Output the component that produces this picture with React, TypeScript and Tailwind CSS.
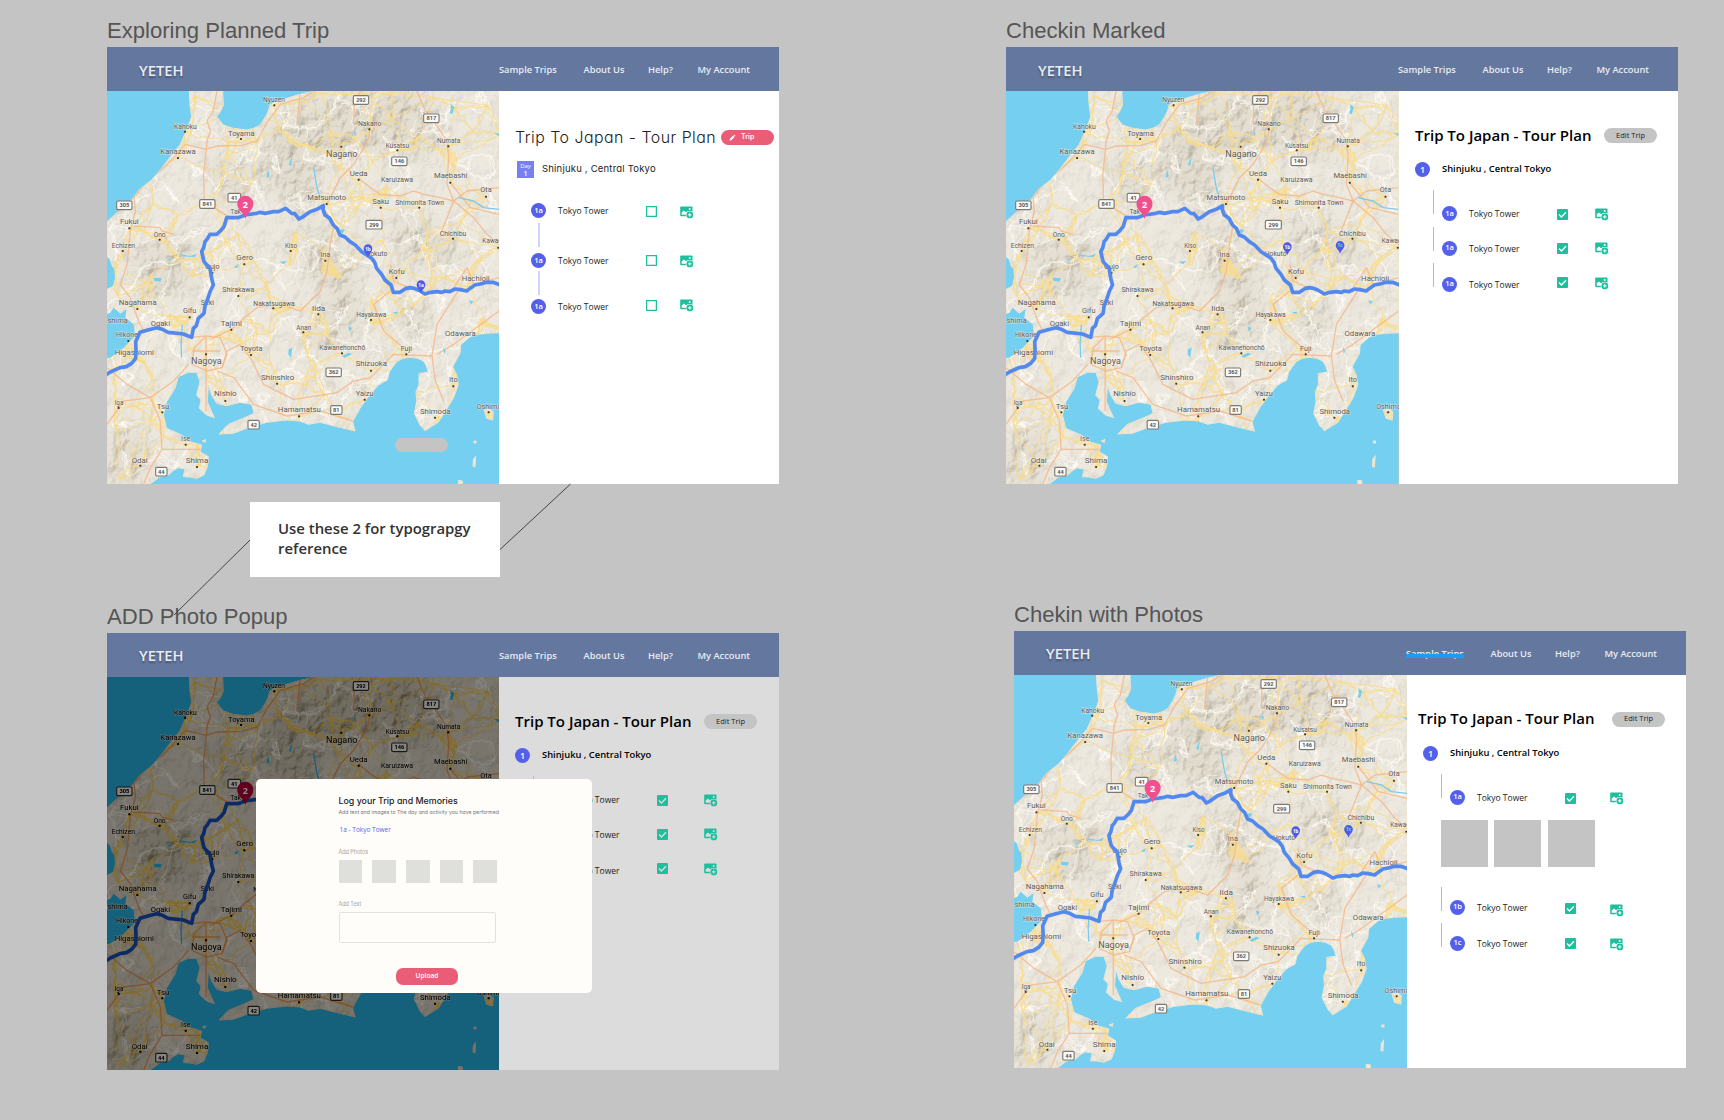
import React from "react";

type Label = [string, number, number, number, number?];
type Point = [number, number];

/* name, centre x, baseline y, width, optional size */
const LABELS: Label[] = [
  ["Nyuzen", 501, 34, 66], ["Kahoku", 235, 114, 68], ["Toyama", 403, 134, 80, 22], ["Kanazawa", 213, 190, 106, 22],
  ["Fukui", 67, 400, 56, 22], ["Ono", 158, 438, 36], ["Echizen", 49, 470, 70], ["Tak", 386, 370, 32], ["Gero", 413, 507, 50, 22],
  ["Gujo", 316, 534, 44], ["Kiso", 552, 472, 36], ["Nakano", 788, 106, 70], ["Kusatsu", 871, 170, 70], ["Nagano", 704, 198, 94, 27],
  ["Ueda", 755, 254, 54, 22], ["Karuizawa", 870, 274, 96], ["Maebashi", 1031, 262, 100, 22], ["Numata", 1025, 155, 70],
  ["Ota", 1137, 304, 34, 22], ["Matsumoto", 659, 327, 116, 22], ["Saku", 821, 340, 50, 22], ["Shimonita Town", 938, 341, 146],
  ["Chichibu", 1038, 434, 80], ["Kawagoe", 1166, 457, 80], ["Ina", 655, 497, 30], ["Hokuto", 808, 496, 66], ["Kofu", 869, 550, 48, 22],
  ["Hachioji", 1106, 570, 84, 22], ["Shirakawa", 394, 604, 96], ["Nagahama", 92, 642, 114, 22], ["Seki", 301, 642, 40],
  ["Gifu", 248, 666, 40, 22], ["Nakatsugawa", 501, 644, 124], ["Tajimi", 373, 704, 64, 22], ["Ogaki", 160, 704, 58, 22],
  ["Takashima", 8, 697, 108, 22], ["Hikone", 60, 738, 66, 22], ["Higashiomi", 82, 792, 118, 22], ["Toyota", 433, 780, 68, 22],
  ["Nagoya", 298, 820, 92, 27], ["Shinshiro", 512, 866, 100, 22], ["Nishio", 355, 916, 68, 22], ["Iga", 36, 943, 26],
  ["Tsu", 168, 953, 38, 22], ["Hamamatsu", 577, 964, 129, 22], ["Ise", 236, 1050, 28, 22], ["Odai", 98, 1115, 48], ["Shima", 270, 1116, 68, 22],
  ["Anan", 590, 717, 45], ["Iida", 635, 659, 40, 22], ["Hayakawa", 793, 679, 90], ["Fuji", 898, 779, 34, 22],
  ["Kawanehonchō", 706, 778, 138], ["Shizuoka", 793, 826, 94, 22], ["Yaizu", 773, 914, 54, 22], ["Odawara", 1060, 734, 92, 22],
  ["Ito", 1039, 874, 26, 22], ["Shimoda", 985, 968, 92, 22], ["Oshima", 1146, 954, 74],
];

const DOTS: Point[] = [
  [502, 43], [234, 122], [402, 144], [213, 201], [67, 412], [158, 446], [47, 480], [412, 520], [551, 480], [787, 115], [871, 178],
  [703, 167], [755, 266], [1030, 275], [1024, 166], [1137, 317], [659, 339], [821, 350], [937, 350], [1038, 443], [1174, 470],
  [655, 509], [868, 561], [394, 615], [91, 654], [248, 679], [499, 652], [373, 716], [64, 750], [432, 792], [297, 790], [510, 878],
  [355, 930], [35, 951], [166, 964], [576, 976], [236, 1061], [100, 1124], [270, 1128], [589, 724], [634, 670], [792, 687],
  [898, 790], [705, 787], [792, 839], [773, 926], [1039, 886], [984, 980], [1145, 964], [316, 546],
];

const SHIELDS: Label[] = [
  ["292", 762, 27, 46], ["817", 973, 82, 46], ["146", 877, 211, 46], ["299", 801, 401, 48], ["305", 52, 343, 46],
  ["841", 301, 339, 46], ["41", 382, 320, 38], ["42", 440, 1001, 34], ["44", 163, 1142, 34], ["362", 680, 844, 46], ["81", 688, 957, 34],
];

const LAND =
  "M247 0L249 42L254 77L241 112L219 162L194 192L164 232L134 267L99 294L74 327L39 357L0 392V1179H129L159 1157L184 1152L200 1138L214 1130L234 1134L229 1157L250 1158L269 1162L291 1152L301 1127L304 1097L279 1082L284 1062L249 1052L224 1032L179 1012L169 972L179 932L204 892L214 857L244 844L269 844L279 872L269 912L282 927L277 952L299 972L322 980L314 962L301 932L304 882L314 912L329 937L359 944L399 934L434 940L441 967L409 982L364 1000L336 1029L379 1027L419 1012L479 994L539 987L579 990L604 1000L639 994L679 1004L744 1020L737 992L759 952L784 917L814 882L841 867L847 842L869 812L888 802L909 799L932 802L949 810L958 824L964 844L936 847L936 882L927 902L929 932L922 967L939 1002L954 1019L994 994L1014 962L1039 922L1054 882L1049 852L1037 827L1059 787L1061 762L1089 737L1110 730L1139 727L1176 725V0H624L579 10L539 22L505 32L489 42L484 60L476 77L459 102L440 112L419 117L379 112L349 102L329 77L340 62L349 42L347 0ZM1131 957L1145 953L1159 962L1157 987L1139 982ZM1099 1105L1106 1096L1104 1128L1098 1126ZM1054 1168L1066 1170V1179H1054ZM1101 1050H1107V1056H1101ZM286 1050L296 1046L294 1054Z";

const ROUTE =
  "M-4 852L10 843L39 830L58 827L74 817L86 802L87 775L86 752L99 724L120 718L149 710L166 715L184 724L229 729L254 739L259 712L268 704L274 682L291 667L294 645L301 627L310 600L319 582L314 562L309 532L298 520L291 512L284 482L290 470L294 452L300 445L309 430L329 430L340 420L351 407L359 380L394 380L414 372L449 367L460 364L475 367L499 362L515 362L536 352L554 367L563 368L576 384L590 376L609 362L630 355L649 344L648 356L654 372L668 382L679 402L690 412L699 432L714 438L729 452L745 462L764 482L794 502L803 514L809 532L824 550L834 567L852 582L859 604L879 604L895 593L909 590L922 592L934 597L954 609L970 604L989 602L1005 604L1014 600L1028 602L1044 594L1060 596L1079 600L1092 590L1104 582L1120 579L1139 574L1158 574L1180 582";

const TRUNKS = [
  "M330 0L318 60L300 90L310 120L300 150L298 175L290 250L292 339L320 350L370 380L414 372",
  "M0 385L50 350L90 310L110 280L170 230L200 200L235 160L298 175L330 165L403 163L450 150L480 95L520 40L590 20L620 0",
  "M80 300L85 360L70 420L65 470L60 520L40 582L70 620L95 690L110 720",
  "M80 405L160 410L165 420L200 430",
  "M660 340L700 260L740 220L765 180L785 140L790 100",
  "M580 0L572 80L570 100",
  "M740 100L742 40L760 0M930 0L955 60L965 80",
  "M755 262L790 290L820 310L880 315L920 300L950 310L1000 320L1040 330L1080 300L1176 290",
  "M1040 330L1020 280L1025 200L1020 150L960 60",
  "M1040 330L1100 380L1140 430L1176 460M1040 330L1020 380L1000 430M1030 275L1090 350L1176 370",
  "M650 350L680 400L668 470L660 540L640 600L580 660L520 640L450 650L400 690L373 716L310 745",
  "M254 739L297 735L340 740L360 790L345 830L300 840L255 820L262 770L297 735",
  "M297 735V960M340 780H255M330 840L380 860L440 940L540 975L640 960L737 990",
  "M345 830L360 780L400 760L430 800L470 880L560 925L690 905L740 870L790 860L860 790L975 795L990 700L1060 590",
  "M975 795L985 870L1010 930M990 790L1040 760L1176 660M1040 590L1080 530L1100 580L1176 560",
  "M0 830L60 880L130 920L200 870L245 820M130 920L160 990L165 1075H279M165 1075L130 1130L110 1179M0 1000L50 930L130 920",
  "M850 600L800 640L830 720L900 780M850 520L860 570L930 600",
];

const LAKES =
  "M-4 494L8 505L14 524L22 535L24 560L18 584L-4 596ZM-4 672L10 665L20 650L40 668L58 655L55 680L80 700L84 735L50 770L10 800L-4 800ZM480 250L484 238L488 256L478 262ZM545 222L552 204L556 200L552 224ZM1030 40L1042 48L1036 70L1028 66L1032 54ZM1160 125L1180 128V138ZM172 508L195 502L190 508ZM220 490L250 495L270 488L262 498L225 496ZM696 420L704 414L714 418L706 428ZM380 528L395 520L390 532ZM518 512L540 510L530 520ZM140 560L165 562L160 572L142 570ZM723 705L734 712L728 722ZM1008 765L1016 780L1012 790ZM856 664L872 662L870 670ZM1086 628L1100 632L1092 640ZM740 118L748 125L744 135ZM545 775L556 770L552 800L544 790ZM705 795L725 785L735 790L712 800Z";

function rng(seed: number) {
  let s = seed;
  return () => {
    s = (s * 16807) % 2147483647;
    return s / 2147483647;
  };
}

/* A web of minor roads: every point joins its nearest neighbours by a bent line. */
function web(points: Point[], links: number, bend: number, seed: number) {
  const rand = rng(seed);
  let d = "";
  points.forEach((p, i) => {
    points
      .map((q, j) => ({ q, j, r: Math.hypot(p[0] - q[0], p[1] - q[1]) }))
      .filter((o) => o.j !== i)
      .sort((a, b) => a.r - b.r)
      .slice(0, links)
      .forEach(({ q }) => {
        d += `M${p[0]} ${p[1]}`;
        for (let k = 1; k < 5; k++) {
          const t = k / 5;
          const x = p[0] + (q[0] - p[0]) * t + (rand() - 0.5) * bend;
          const y = p[1] + (q[1] - p[1]) * t + (rand() - 0.5) * bend;
          d += `L${x.toFixed(0)} ${y.toFixed(0)}`;
        }
        d += `L${q[0]} ${q[1]}`;
      });
  });
  return d;
}

const scatter = (n: number, seed: number): Point[] => {
  const rand = rng(seed);
  return Array.from({ length: n }, () => [Math.round(rand() * 1176), Math.round(rand() * 1179)] as Point);
};

const YELLOW = web([...DOTS, ...scatter(190, 77)], 4, 16, 11);
const WHITE = web(scatter(480, 991), 3, 14, 5);
const SHADE = web(scatter(260, 4242), 2, 26, 9);

function Pin({ x, y, text, color = "#fff" }: { x: number; y: number; text: string; color?: string }) {
  return (
    <g transform={`translate(${x} ${y})`}>
      <path d="M0 24C-3 14-13 9-13-1A13 13 0 0 1 13-1C13 9 3 14 0 24Z" fill="#4f5be8" />
      <text y="5" textAnchor="middle" fontSize="14" fontWeight="700" fill={color} fontFamily="Open Sans, sans-serif">
        {text}
      </text>
    </g>
  );
}

type MapProps = { id: string; onRoute?: boolean; className?: string; route?: string; pin?: string };

function TripMap({ id, onRoute, className = "w-[392px]", route = "#5389ee", pin = "#f1508f" }: MapProps) {
  return (
    <svg viewBox="0 0 1176 1179" preserveAspectRatio="none" className={`block h-[393px] shrink-0 ${className}`}>
      <defs>
        <clipPath id={`${id}-land`}>
          <path d={LAND} />
        </clipPath>
        <filter id={`${id}-relief`} x="0" y="0" width="100%" height="100%" colorInterpolationFilters="sRGB">
          <feTurbulence type="fractalNoise" baseFrequency="0.024 0.02" numOctaves="4" seed="8" />
          <feDiffuseLighting surfaceScale="18" lightingColor="#ffffff">
            <feDistantLight azimuth="225" elevation="58" />
          </feDiffuseLighting>
          <feColorMatrix type="matrix" values="0 0 0 0 .6  0 0 0 0 .57  0 0 0 0 .5  -1.5 0 0 0 1.3" />
        </filter>
        <filter id={`${id}-soft`} x="-30%" y="-30%" width="160%" height="160%">
          <feGaussianBlur stdDeviation="28" />
        </filter>
        <mask id={`${id}-hills`} maskUnits="userSpaceOnUse" x="0" y="0" width="1176" height="1179">
          <rect width="1176" height="1179" fill="#4a4a4a" />
          <g fill="#fff" filter={`url(#${id}-soft)`}>
            <path d="M500 90L680 0H900L1000 60L980 200L830 180L640 220L610 400L540 330L420 230Z" />
            <path d="M680 420L740 500L760 700L640 800L600 720L680 600L600 560L570 430Z" />
            <path d="M840 380L1000 400L1080 520L900 520ZM300 200L420 220L420 330L320 300ZM60 480L250 430L280 560L120 640Z" />
            <path d="M870 620L960 640L950 740L880 730ZM0 1040L120 1000L120 1179H0Z" />
          </g>
        </mask>
      </defs>
      <rect width="1176" height="1179" fill="#75cff0" />
      <path d={LAND} fill="#f2eee6" stroke="#ece6d2" strokeWidth="3" />
      <g clipPath={`url(#${id}-land)`}>
        <g mask={`url(#${id}-hills)`}>
          <rect width="1176" height="1179" fill="#e0dbcc" opacity=".85" />
          <rect width="1176" height="1179" filter={`url(#${id}-relief)`} opacity=".62" />
        </g>
        <g fill="none" strokeLinejoin="round">
          <path d={SHADE} stroke="#d8d2c6" strokeWidth="2" opacity=".5" />
          <path d={WHITE} stroke="#fffdf8" strokeWidth="2.6" opacity=".65" />
          <path d={YELLOW} stroke="#f9dc88" strokeWidth="3" opacity=".85" />
          {TRUNKS.map((d) => (
            <path key={d} d={d} stroke="#f4b98a" strokeWidth="4" opacity=".85" />
          ))}
          <path d="M226 700L222 760L224 800M1055 320L1100 330L1130 350L1176 355M0 800L20 790M620 230L630 290L640 320" stroke="#7ccbea" strokeWidth="4" />
        </g>
        <path d={LAKES} fill="#75cff0" />
      </g>
      <g fontFamily="Roboto, Noto Sans, sans-serif" textAnchor="middle">
        {LABELS.map(([t, x, y, w, s = 20]) => (
          <text key={t} x={x} y={y} fontSize={s} textLength={w} lengthAdjust="spacingAndGlyphs" fill="#5d5a56" stroke="#f6f2ea" strokeWidth="3" strokeOpacity=".7" paintOrder="stroke">
            {t}
          </text>
        ))}
        {DOTS.map(([x, y]) => (
          <rect key={`${x}-${y}`} x={x - 3} y={y - 3} width="6" height="6" rx="2" fill="#3b3a38" />
        ))}
        {SHIELDS.map(([t, x, y, w]) => (
          <g key={t}>
            <rect x={x - w / 2} y={y - 13} width={w} height="26" rx="4" fill="#fbfaf7" stroke="#7b7976" strokeWidth="3.4" />
            <text x={x} y={y + 6} fontSize="17" fontWeight="700" fill="#5a5855">
              {t}
            </text>
          </g>
        ))}
      </g>
      <path d={ROUTE} fill="none" stroke={route} strokeWidth="11" strokeLinejoin="round" />
      <path d="M415 384C410 364 391 358 391 338A24 24 0 0 1 439 338C439 358 420 364 415 384Z" fill={pin} />
      <text x="415" y="350" textAnchor="middle" fontSize="27" fontWeight="700" fill="#fff" fontFamily="Open Sans, sans-serif">
        2
      </text>
      {onRoute ? (
        <>
          <Pin x={783} y={474} text="1b" />
          <Pin x={942} y={582} text="1a" />
        </>
      ) : (
        <>
          <Pin x={843} y={468} text="1b" />
          <Pin x={1001} y={464} text="1c" color="#4ff0b0" />
        </>
      )}
    </svg>
  );
}

function Header({ struck }: { struck?: boolean }) {
  return (
    <header className="grid h-11 shrink-0 grid-cols-[360px_84.5px_64.5px_49.5px_auto] items-center bg-[#64779e] pl-8 pt-0.5 text-[9.3px] font-semibold leading-none whitespace-nowrap text-[#e9ecf2]">
      <span className="text-[14.7px] [text-shadow:0_2px_2px_rgba(0,0,0,0.3)]">YETEH</span>
      <span className="relative justify-self-start">
        Sample Trips
        {struck && <i className="absolute top-[5px] left-0 h-[4.5px] w-[58px] bg-[#1f9bf3]" />}
      </span>
      <span>About Us</span>
      <span>Help?</span>
      <span>My Account</span>
    </header>
  );
}

function PhotoIcon({ className, bg = "fill-white" }: { className: string; bg?: string }) {
  return (
    <svg viewBox="0 0 14 13" className={`h-[13px] w-[14px] shrink-0 ${className}`}>
      <rect x=".2" y=".4" width="12.3" height="9.8" rx=".9" fill="#1dbf9d" />
      <g className={bg}>
        <path d="M1.7 8.7V6.6L3.9 4.4L6.1 6.2L8.3 4.9L7.2 8.7Z" />
        <circle cx="9.7" cy="3" r="1" />
        <circle cx="9.8" cy="8.9" r="4" />
      </g>
      <circle cx="9.8" cy="8.9" r="3.4" fill="#1dbf9d" />
      <path d="M9.8 7.1V10.7M8 8.9H11.6" className={bg === "fill-white" ? "stroke-white" : "stroke-[#dcdcdc]"} strokeWidth="1" />
    </svg>
  );
}

function Check({ className, tick = "stroke-white" }: { className: string; tick?: string }) {
  return (
    <svg viewBox="0 0 11 11" className={`size-[11px] shrink-0 ${className}`}>
      <rect width="11" height="11" rx="1" fill="#1dbf9d" />
      <path d="M2 5.6L4.4 7.9L9 3.2" fill="none" className={tick} strokeWidth="1.4" />
    </svg>
  );
}

function Badge({ children, className = "" }: { children: React.ReactNode; className?: string }) {
  return (
    <span className={`flex size-[15px] shrink-0 items-center justify-center rounded-full bg-[#5460ec] leading-none font-semibold text-white ${className}`}>
      {children}
    </span>
  );
}

const Name = () => <span className="w-[88px] shrink-0 leading-[15px] text-[#222]">Tokyo Tower</span>;

type Stop = { code: string; top: string; check: string; icon: string; box: string };

function StopRow({ stop, bg, tick }: { stop: Stop; bg?: string; tick?: string }) {
  return (
    <div className={`flex items-start text-[8.5px] whitespace-nowrap ${stop.box}`}>
      <span className="h-6 w-px shrink-0 bg-[#aeb3f5]" />
      <div className={`ml-2 flex items-start ${stop.top}`}>
        <Badge className="mr-3 text-[7.6px]">{stop.code}</Badge>
        <Name />
        <Check className={stop.check} tick={tick} />
        <PhotoIcon className={stop.icon} bg={bg} />
      </div>
    </div>
  );
}

function PlanTitle({ className, gap }: { className: string; gap: string }) {
  return (
    <div className={`flex h-[15px] items-center whitespace-nowrap ${className}`}>
      <h2 className={`shrink-0 text-[15px] font-semibold leading-none text-black ${gap}`}>Trip To Japan - Tour Plan</h2>
      <span className="flex h-[15px] w-[53px] shrink-0 items-center justify-center rounded-full bg-[#c4c4c4] text-[7.5px] text-[#222]">
        Edit Trip
      </span>
    </div>
  );
}

function DayRow({ className }: { className: string }) {
  return (
    <div className={`flex h-[15px] items-center whitespace-nowrap ${className}`}>
      <Badge className="mr-3 text-[9px]">1</Badge>
      <span className="text-[9.35px] font-semibold text-black">Shinjuku , Central Tokyo</span>
    </div>
  );
}

const STOPS: Stop[] = [
  { code: "1a", box: "h-[37px]", top: "mt-4", check: "mt-[2.5px]", icon: "ml-[27px] mt-[2px]" },
  { code: "1a", box: "h-9", top: "mt-[13.5px]", check: "mt-[2px]", icon: "ml-[27px] mt-px" },
  { code: "1a", box: "h-9", top: "mt-[13.5px]", check: "mt-0", icon: "ml-[27px]" },
];

const POPUP_STOPS: Stop[] = [
  { ...STOPS[0], icon: "ml-9 mt-[2px]" },
  { ...STOPS[1], icon: "ml-9 mt-px" },
  { ...STOPS[2], icon: "ml-9" },
];

const OPEN_STOPS = [
  { check: "mt-[3px]", icon: "mt-[2.5px]", line: true },
  { check: "mt-[2px]", icon: "mt-[1.5px]", line: true },
  { check: "mt-px", icon: "mt-0", line: false },
];

function Board({ title, className, children, struck }: { title: string; className: string; children: React.ReactNode; struck?: boolean }) {
  return (
    <section className={`absolute flex w-[672px] flex-col ${className}`}>
      <h1 className="h-8 pt-[5px] font-['Liberation_Sans'] text-[22.1px] leading-[22px] whitespace-nowrap text-[#555]">{title}</h1>
      <Header struck={struck} />
      <div className="flex h-[393px]">{children}</div>
    </section>
  );
}

function ExploringBoard() {
  return (
    <Board title="Exploring Planned Trip" className="top-[15px] left-[107px]">
      <div className="relative shrink-0">
        <TripMap id="explore" onRoute />
        <span className="absolute top-[347px] left-72 h-[14px] w-[53px] rounded-full bg-[#c4c4c4]" />
      </div>
      <div className="min-w-0 grow bg-white whitespace-nowrap">
        <div className="mt-[39px] ml-4 flex h-[15px] items-center font-[Inter] [font-feature-settings:'cv11']">
          <h2 className="w-[206px] shrink-0 text-[15.9px] font-light leading-none tracking-[0.48px] text-[#222]">Trip To Japan - Tour Plan</h2>
          <span className="flex h-[15px] w-[53px] shrink-0 items-center rounded-full bg-[#e95d76] pl-2 text-[7px] font-semibold text-white">
            <svg viewBox="0 0 24 24" className="mr-[5px] size-[7px]" fill="#fff">
              <path d="M2 22l1-6L14 5l5 5L8 21zM15.500 3.500l2-2 5 5-2 2z" />
            </svg>
            Trip
          </span>
        </div>
        <div className="mt-4 ml-[18px] flex h-[17px] items-center">
          <span className="mr-2 flex size-[17px] flex-col items-center justify-center bg-[#7680f3] text-[6px] leading-[7px] text-white">
            <span>Day</span>
            <span className="text-[7px] font-semibold">1</span>
          </span>
          <span className="font-[Inter] text-[9.5px] tracking-[0.2px] text-[#222] [font-feature-settings:'cv11']">Shinjuku , Central Tokyo</span>
        </div>
        <div className="mt-[25px] ml-8 flex flex-col text-[8.5px]">
          {OPEN_STOPS.map((s, i) => (
            <div key={i} className={i === 0 ? "h-[50px]" : "h-[46px]"}>
              <div className="flex h-[15px] items-start">
                <Badge className="mr-3 text-[7.6px]">1a</Badge>
                <Name />
                <span className={`size-[11px] shrink-0 border border-[#1dbf9d] shadow-[inset_0_0_0_0.5px_#8edfce] ${s.check}`} />
                <PhotoIcon className={`ml-[23px] ${s.icon}`} />
              </div>
              {s.line && <span className={`ml-[7px] block h-6 w-[1.5px] bg-[#cfd2fa] ${i === 0 ? "mt-[5px]" : "mt-[3px]"}`} />}
            </div>
          ))}
        </div>
      </div>
    </Board>
  );
}

function CheckinBoard() {
  return (
    <Board title="Checkin Marked" className="top-[15px] left-[1006px]">
      <TripMap id="checkin" className="w-[392.5px]" />
      <div className="min-w-0 grow bg-white">
        <PlanTitle className="mt-[37px] ml-[16.5px]" gap="w-[189px]" />
        <DayRow className="mt-[19px] ml-[16.5px]" />
        <div className="mt-[13px] ml-[34.5px]">
          {STOPS.map((s, i) => (
            <StopRow key={i} stop={s} />
          ))}
        </div>
      </div>
    </Board>
  );
}

function PopupBoard() {
  return (
    <Board title="ADD Photo Popup" className="top-[600.5px] left-[107px]">
      <TripMap id="popup" className="w-[392px] brightness-[.52] contrast-[1.6]" route="#6a8ed4" pin="#d0557f" />
      <div className="min-w-0 grow bg-[#dcdcdc]">
        <PlanTitle className="mt-[37.5px] ml-4" gap="w-[189px]" />
        <DayRow className="mt-[19px] ml-4" />
        <div className="mt-[13px] ml-[34px]">
          {POPUP_STOPS.map((s, i) => (
            <StopRow key={i} stop={s} bg="fill-[#dcdcdc]" tick="stroke-[#dcdcdc]" />
          ))}
        </div>
      </div>
      <div className="absolute top-[178.5px] left-[148.5px] flex h-[213.5px] w-[336.5px] flex-col items-start rounded-[5px] bg-[#fffdf9] pl-[83px] whitespace-nowrap text-[#777]">
        <h3 className="mt-[15.5px] font-[Inter] text-[8.85px] leading-3 font-medium text-[#222] [font-feature-settings:'cv11']">Log your Trip and Memories</h3>
        <p className="mt-[1.5px] font-[Inter] text-[5.2px] leading-2 [font-feature-settings:'cv11']">
          Add text and images to The day and activity you have performed
        </p>
        <p className="mt-[9px] ml-px text-[6.5px] leading-[10px] text-[#5a63ee]">1a - Tokyo Tower</p>
        <p className="mt-[13px] font-[Inter] text-[5.5px] leading-2 font-light [font-feature-settings:'cv11']">Add Photos</p>
        <div className="mt-[3.5px] flex gap-[10px]">
          {[0, 1, 2, 3, 4].map((n) => (
            <span key={n} className="size-[23.7px] bg-[#dfe0dc]" />
          ))}
        </div>
        <p className="mt-[17px] font-[Inter] text-[5.5px] leading-2 font-light [font-feature-settings:'cv11']">Add Text</p>
        <span className="mt-[3.5px] h-[31px] w-[157px] rounded-[2px] border border-[#e2e2df]" />
        <span className="mt-[25px] ml-[57.5px] flex h-[17px] w-[62px] items-center justify-center rounded-[7px] bg-[#e95d76] text-[6.6px] font-semibold text-white">
          Upload
        </span>
      </div>
    </Board>
  );
}

function PhotosBoard() {
  return (
    <Board title="Chekin with Photos" className="top-[598.5px] left-[1014px]" struck>
      <TripMap id="photos" className="w-[393px]" />
      <div className="min-w-0 grow bg-white">
        <PlanTitle className="mt-[37px] ml-[11px]" gap="w-[194px] -mt-[2px]" />
        <DayRow className="mt-[19px] ml-4" />
        <div className="mt-[13px] ml-[34px]">
          <StopRow stop={{ code: "1a", box: "h-[46px]", top: "mt-4", check: "mt-[3px]", icon: "ml-[34px] mt-[2px]" }} />
          <div className="mb-5 flex h-[47px]">
            <span className="mr-[6px] w-[47px] bg-[#c4c4c4]" />
            <span className="mr-[7px] w-[47px] bg-[#c4c4c4]" />
            <span className="w-[47px] bg-[#c4c4c4]" />
          </div>
          <StopRow stop={{ code: "1b", box: "h-9", top: "mt-[13px]", check: "mt-[3px]", icon: "ml-[34px] mt-1" }} />
          <StopRow stop={{ code: "1c", box: "h-9", top: "mt-[13px]", check: "mt-[2px]", icon: "ml-[34px] mt-[2.5px]" }} />
        </div>
      </div>
    </Board>
  );
}

export default function App() {
  return (
    <main className="relative h-[1120px] w-[1724px] overflow-hidden bg-[#c4c4c4] font-['Open_Sans']">
      <ExploringBoard />
      <CheckinBoard />
      <PopupBoard />
      <PhotosBoard />
      <svg viewBox="0 0 1724 1120" className="pointer-events-none absolute inset-0 h-[1120px] w-[1724px]" stroke="#444" strokeWidth="1">
        <path d="M250 540L174 615M570.5 484L499.5 550" />
      </svg>
      <aside className="absolute top-[501.5px] left-[250px] h-[75.5px] w-[250px] bg-white pt-4 pl-7 text-[14.9px] leading-[20.5px] font-semibold whitespace-nowrap text-[#333]">
        Use these 2 for typograpgy
        <br />
        reference
      </aside>
    </main>
  );
}
